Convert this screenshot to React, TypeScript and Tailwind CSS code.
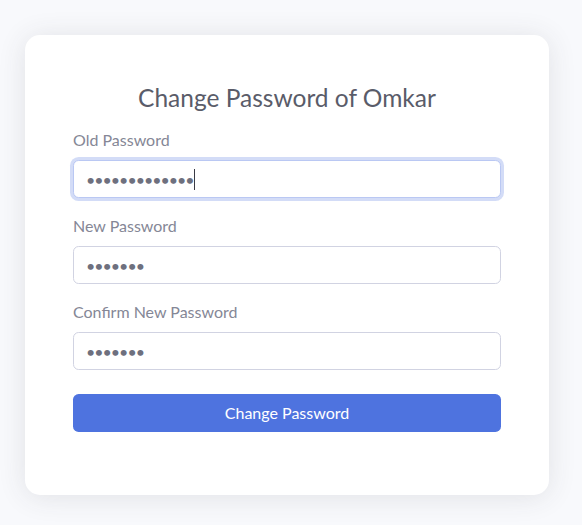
import React from "react";

const font = { fontFamily: "Lato, 'Noto Sans', sans-serif" };

function Field({ label, value, focused }: { label: string; value: string; focused?: boolean }) {
  return (
    <div className="mb-4">
      <label className="block mb-2 text-[16px] leading-6 text-[#858796]">{label}</label>
      <div className="relative">
        <input
          type="password"
          defaultValue={value}
          autoFocus={focused}
          className={
            "block w-full h-[38px] px-3 rounded-[5.6px] bg-white text-[16px] text-[#6e707e] tracking-[-1px] outline-none border caret-transparent " +
            (focused
              ? "border-[#bac8f3] shadow-[0_0_0_3px_rgba(78,115,223,0.25)]"
              : "border-[#d1d3e2]")
          }
        />
        {focused && (
          <span className="absolute left-[121px] top-[9px] h-[21px] w-px bg-[#3a3b45]" />
        )}
      </div>
    </div>
  );
}

export default function App() {
  return (
    <div className="min-h-[525px] w-full bg-[#f8f9fc] pt-[35px] px-[25px]" style={font}>
      <div className="w-[524px] h-[460px] bg-white rounded-[15px] shadow-[0_2px_28px_0_rgba(58,59,69,0.12)] px-12 pt-12">
        <h4 className="text-center text-[24.5px] leading-[1.2] text-[#5a5c69] mb-4">Change Password of Omkar</h4>
        <Field label="Old Password" value="Omkar@1234567" focused />
        <Field label="New Password" value="abcdefg" />
        <Field label="Confirm New Password" value="abcdefg" />
        <button className="mt-2 w-full h-[38px] rounded-[5.6px] bg-[#4e73df] text-white text-[16px]">
          Change Password
        </button>
      </div>
    </div>
  );
}
